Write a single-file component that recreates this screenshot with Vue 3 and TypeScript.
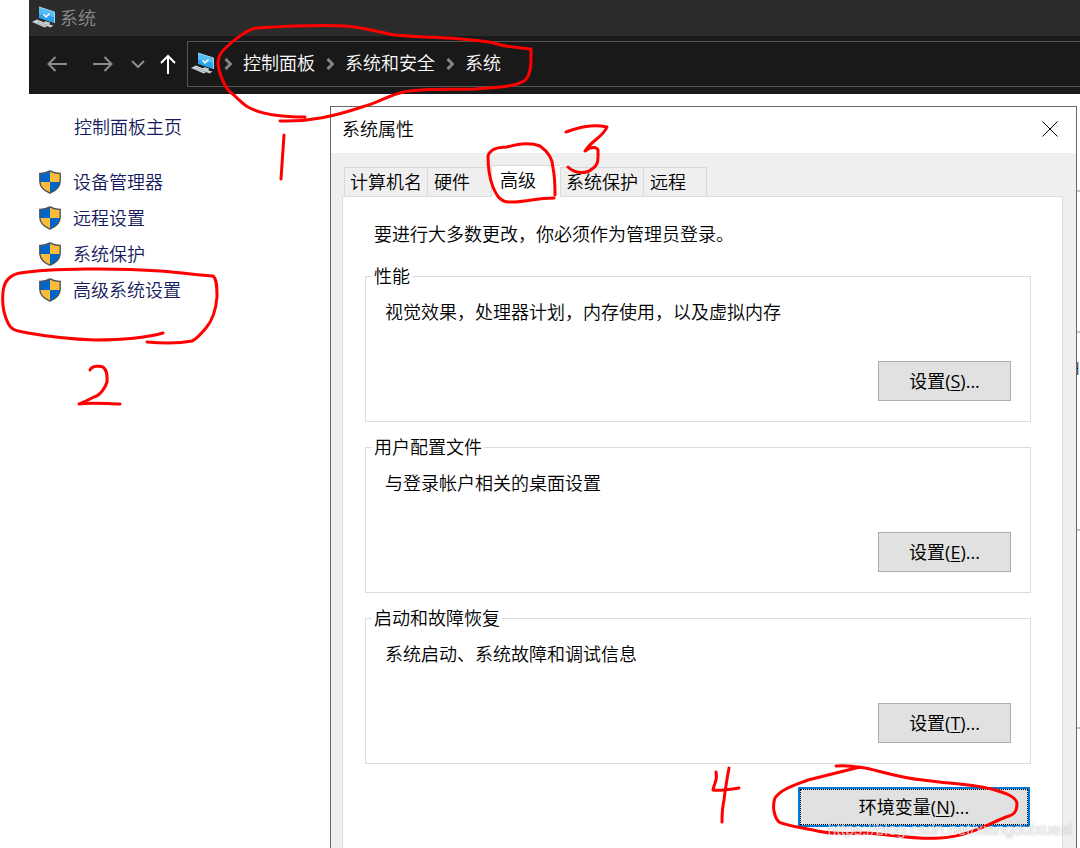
<script setup lang="ts">
interface Group {
  title: string
  text: string
  key: string
}

const crumbs: string[] = ['控制面板', '系统和安全', '系统']
const tasks: string[] = ['设备管理器', '远程设置', '系统保护', '高级系统设置']
const tabs: { label: string; size: string; active?: boolean }[] = [
  { label: '计算机名', size: 'wide' },
  { label: '硬件', size: 'narrow' },
  { label: '高级', size: 'current', active: true },
  { label: '系统保护', size: 'wide' },
  { label: '远程', size: 'narrow' },
]
const groups: Group[] = [
  { title: '性能', text: '视觉效果，处理器计划，内存使用，以及虚拟内存', key: 'S' },
  { title: '用户配置文件', text: '与登录帐户相关的桌面设置', key: 'E' },
  { title: '启动和故障恢复', text: '系统启动、系统故障和调试信息', key: 'T' },
]
</script>

<template>
  <div class="page">
    <svg width="0" height="0" class="defs" aria-hidden="true">
      <symbol id="pc" viewBox="0 0 24 24">
        <path d="M7 1 L22 6 V17 L7 12 Z" fill="#2f9fe8" />
        <path d="M7 1 L22 6 V11 L7 8 Z" fill="#56bcf8" />
        <path d="M7 1 L22.500 6 V17" fill="none" stroke="#a9d6ee" stroke-width="1" />
        <path d="M11.500 8.500 L14 11 L17.500 7.500" fill="none" stroke="#fff" stroke-width="1.500" />
        <path d="M13 15 L18 16.500 L17.500 18.500 L21.500 19.500 L18.500 21.500 L11.500 18.500 Z" fill="#c3ccd3" />
        <path d="M0 16 L5 13.500 L15 17.500 L10.500 20.500 Z" fill="#d5dbe0" />
        <path d="M2.500 16.500 L12 19.500 M5 15 L13.500 18.500" stroke="#8d99a3" stroke-width=".7" />
        <path d="M10 20 L13 19 L15 20.500 L12.500 21.500 Z" fill="#c9d2d9" />
      </symbol>
      <symbol id="shield" viewBox="0 0 22 24">
        <path d="M11 0.700 C8 2.500 4.500 3.500 0.700 3.300 V11 C0.700 17 5.500 21 11 23.300 C16.500 21 21.300 17 21.300 11 V3.300 C17.500 3.500 14 2.500 11 0.700 Z" fill="#0067c8" />
        <path d="M11 1 C14 2.700 17.500 3.600 21 3.500 V12 H11 Z" fill="#fdbb3c" />
        <path d="M1 12 H11 V23 C5.500 20.700 1.300 17 1 12 Z" fill="#fdbb3c" />
        <path d="M11 0.900 C8 2.600 4.500 3.500 0.800 3.400 V11 C0.800 17 5.500 21 11 23.200 C16.500 21 21.200 17 21.200 11 V3.400 C17.500 3.500 14 2.600 11 0.900 Z" fill="none" stroke="#4b5258" stroke-width="1.300" />
      </symbol>
    </svg>

    <div class="window">
      <header class="titlebar">
        <svg class="pc"><use href="#pc" /></svg>
        <span>系统</span>
      </header>

      <nav class="navbar">
        <button class="nav back" aria-label="后退">
          <svg width="20" height="16" viewBox="0 0 20 16"><path d="M20 8 H1.500 M8.500 1 L1.500 8 L8.500 15" /></svg>
        </button>
        <button class="nav forward" aria-label="前进">
          <svg width="20" height="16" viewBox="0 0 20 16"><path d="M0 8 H18.500 M11.500 1 L18.500 8 L11.500 15" /></svg>
        </button>
        <button class="nav recent" aria-label="最近">
          <svg width="14" height="8" viewBox="0 0 14 8"><path d="M1 1 L7 7 L13 1" /></svg>
        </button>
        <button class="nav up" aria-label="向上">
          <svg width="16" height="20" viewBox="0 0 16 20"><path d="M8 20 V2 M1 9 L8 2 L15 9" /></svg>
        </button>
        <div class="address">
          <svg class="pc"><use href="#pc" /></svg>
          <template v-for="c in crumbs" :key="c">
            <svg class="sep" width="8" height="12" viewBox="0 0 8 12"><path d="M1.500 1 L6.500 6 L1.500 11" /></svg>
            <a href="#">{{ c }}</a>
          </template>
        </div>
      </nav>

      <div class="body">
        <aside class="sidebar">
          <a href="#" class="home">控制面板主页</a>
          <a v-for="t in tasks" :key="t" href="#" class="task">
            <svg width="22" height="24"><use href="#shield" /></svg>
            <span>{{ t }}</span>
          </a>
        </aside>

        <section class="dialog" role="dialog" aria-label="系统属性">
          <div class="caption">
            <span>系统属性</span>
            <button class="close" aria-label="关闭">
              <svg width="16" height="16" viewBox="0 0 16 16"><path d="M.5 .5 L15.500 15.500 M15.500 .5 L.5 15.500" /></svg>
            </button>
          </div>
          <div class="sheet">
            <div class="tabs" role="tablist">
              <button
                v-for="t in tabs"
                :key="t.label"
                class="tab"
                :class="[t.size, { active: t.active }]"
                role="tab"
                :aria-selected="!!t.active"
              >{{ t.label }}</button>
            </div>
            <div class="panel" role="tabpanel">
              <p class="intro">要进行大多数更改，你必须作为管理员登录。</p>
              <fieldset v-for="g in groups" :key="g.key">
                <legend>{{ g.title }}</legend>
                <p>{{ g.text }}</p>
                <button class="btn">设置(<u>{{ g.key }}</u>)...</button>
              </fieldset>
              <button class="btn env"><span>环境变量(<u>N</u>)...</span></button>
            </div>
          </div>
        </section>

        <div class="behind">
          <i></i><i class="second"></i><span>H</span><i class="third"></i><i class="fourth"></i>
        </div>
      </div>
    </div>

    <svg class="ink" width="1080" height="848" viewBox="0 0 1080 848" aria-hidden="true">
      <path d="M305 117 C285 117 262 115 248 107 C240 102 236 96 230 92 C224 86 218 71 218 62 C219 52 225 49 232 42 C240 36 248 29 256 28 C290 26 325 25 345 26 C368 28 378 32 395 35 C425 38 465 37 494 43 C505 47 520 48 531 49 C531 59 532 76 524 81 C511 88 495 87 475 89 C450 90 415 88 400 93 C385 97 378 103 362 107 C335 116 310 122 280 121" />
      <path d="M284 135 C283 150 282 165 281 179" />
      <path d="M163 333 C145 338 125 340 95 340 C65 339 45 336 28 333 C20 331 12 332 8 323 C3 313 2 302 3 292 C4 281 9 275 20 273 C50 268 120 268 160 271 C185 273 198 275 213 276 C217 279 217 288 217 297 C216 309 212 321 206 328 C201 334 197 339 192 341 C176 344 160 343 147 342" />
      <path d="M90 370 C92 365 101 366 103 367 C108 371 107 377 107 382 C105 389 99 396 94 397 C90 399 84 402 79 404 C92 402 108 404 120 404" />
      <path d="M554 198 C535 198 523 203 508 202 C499 201 496 194 493 187 C489 177 488 165 488 156 C490 149 499 147 507 147 C520 143 530 142 540 146 C547 151 553 158 553 168 C555 177 555 187 555 195" />
      <path d="M566 132 C580 127 592 124 607 127 C603 137 592 140 585 151 C591 146 597 147 598 150 C598 159 599 165 592 169 C586 174 575 174 568 167" />
      <path d="M716 772 C718 781 714 783 713 790 C719 791 732 789 739 788 M729 768 C727 779 725 790 724 800 C722 809 722 815 722 822" />
      <path d="M836 766 C850 765 858 767 865 768 C885 772 900 778 923 780 C950 784 975 784 995 790 C1005 793 1015 796 1017 803 C1017 812 1014 815 1006 817 C990 823 970 836 940 838 C915 840 888 834 865 833 C845 834 827 834 813 830 C800 827 787 826 779 822 C774 817 772 806 775 798 C781 789 795 785 808 780 C820 777 840 772 860 767" />
    </svg>
    <span class="watermark">https://blog.csdn.net/xiangduixuexi</span>
  </div>
</template>

<style>
html,
body {
  margin: 0;
  background: #fff;
}
</style>

<style scoped>
.page {
  position: relative;
  display: flex;
  min-height: 100vh;
  overflow: hidden;
  padding-left: 29px;
  box-sizing: border-box;
  font: 350 18px/24px "Open Sans", "Noto Sans CJK SC", sans-serif;
  color: #000;
}
.page * {
  box-sizing: border-box;
}
.defs,
.ink {
  position: absolute;
  left: 0;
  top: 0;
}
.window {
  flex: 1;
  min-width: 0;
  display: flex;
  flex-direction: column;
}
a {
  color: inherit;
  text-decoration: none;
}
button {
  font: inherit;
  color: inherit;
  padding: 0;
  border: 0;
  background: none;
}
p {
  margin: 0;
}
svg {
  display: block;
  flex: none;
}
.pc {
  width: 24px;
  height: 24px;
}
.titlebar {
  display: flex;
  align-items: center;
  gap: 4px;
  height: 36px;
  padding-left: 3px;
  background: #2b2b2b;
  color: #8c8c8c;
}
.navbar {
  display: flex;
  align-items: center;
  height: 58px;
  padding: 0 0 2px 18px;
  background: #191919;
}
.nav path {
  fill: none;
  stroke: #8e8e8e;
  stroke-width: 2;
}
.forward {
  margin-left: 26px;
}
.recent {
  margin-left: 18px;
}
.up {
  margin: 0 11px 0 15px;
}
.up path {
  stroke: #fff;
}
.address {
  flex: 1;
  display: flex;
  align-items: center;
  height: 46px;
  padding-left: 3px;
  border: 1px solid #555;
  border-right: 0;
  color: #fff;
}
.address a {
  padding-bottom: 2px;
}
.sep {
  margin: 0 11px;
}
.pc + .sep {
  margin-left: 9px;
}
.sep path {
  fill: none;
  stroke: #858585;
  stroke-width: 3;
}
.body {
  flex: 1;
  display: flex;
}
.sidebar {
  width: 301px;
  flex: none;
  display: flex;
  flex-direction: column;
  gap: 12px;
  padding: 21px 0 0 10px;
  color: #151b5c;
}
.home {
  margin-bottom: 19px;
  padding-left: 35px;
}
.task {
  display: flex;
  gap: 12px;
}
.dialog {
  flex: 1;
  min-width: 0;
  display: flex;
  flex-direction: column;
  margin-top: 12px;
  border: 1px solid #686868;
  border-bottom: 0;
  background: #efefef;
}
.caption {
  display: flex;
  justify-content: space-between;
  align-items: center;
  height: 46px;
  padding: 0 18px 2px 11px;
  background: #fff;
}
.close path {
  fill: none;
  stroke: #000;
  stroke-width: 1;
}
.sheet {
  flex: 1;
  display: flex;
  flex-direction: column;
  padding: 12px 13px 0 11px;
}
.tabs {
  display: flex;
  align-items: flex-end;
  height: 31px;
  padding-left: 2px;
}
.tab {
  height: 29px;
  padding: 0 5px;
  border: 1px solid #d9d9d9;
  border-right: 0;
  border-bottom: 0;
  text-align: left;
  white-space: nowrap;
}
.wide {
  width: 83px;
}
.narrow {
  width: 64px;
  padding-left: 6px;
}
.tab:last-child {
  border-right: 1px solid #d9d9d9;
}
.current {
  width: 69px;
}
.active {
  height: 32px;
  margin-bottom: -1px;
  padding: 0 8px 3px;
  background: #fff;
  z-index: 1;
}
.panel {
  flex: 1;
  display: flex;
  flex-direction: column;
  padding: 25px 31px 20px 22px;
  border: 1px solid #dcdcdc;
  border-bottom: 0;
  background: #fff;
}
.intro {
  margin: 0 0 18px 9px;
}
fieldset {
  display: flex;
  flex-direction: column;
  min-width: 0;
  margin: 0 0 13px;
  padding: 12px 19px 20px;
  border: 1px solid #dcdcdc;
}
legend {
  margin-left: -13px;
  padding: 0 2px;
}
.btn {
  align-self: flex-end;
  width: 133px;
  height: 40px;
  border: 1px solid #adadad;
  background: #e1e1e1;
  font-weight: 400;
}
fieldset .btn {
  margin-top: 37px;
}
.env {
  width: 232px;
  margin: 10px 1px 0 0;
  border: 2px solid #0078d7;
}
.env span {
  display: flex;
  align-items: center;
  justify-content: center;
  height: 100%;
  border: 1px dotted #000;
}
u {
  text-decoration-thickness: 1px;
  text-underline-offset: 2px;
}
.behind {
  width: 3px;
  flex: none;
  overflow: hidden;
  display: flex;
  flex-direction: column;
  align-items: flex-end;
  padding-top: 96px;
}
.behind i {
  width: 3px;
  height: 2px;
  background: #c4c4c4;
}
.second {
  margin-top: 139px;
}
.behind span {
  margin: 23px 0 0;
}
.third {
  margin-top: 149px;
}
.fourth {
  margin-top: 196px;
}
.ink {
  z-index: 2;
  pointer-events: none;
}
.ink path {
  fill: none;
  stroke: #fe0000;
  stroke-width: 3;
  stroke-linecap: round;
  stroke-linejoin: round;
}
.watermark {
  position: absolute;
  right: 8px;
  bottom: 6px;
  z-index: 3;
  font: 400 16px/24px "Liberation Sans", sans-serif;
  color: rgba(255, 255, 255, 0.7);
  text-shadow: 0 0 2px rgba(0, 0, 0, 0.3);
  pointer-events: none;
}
</style>
